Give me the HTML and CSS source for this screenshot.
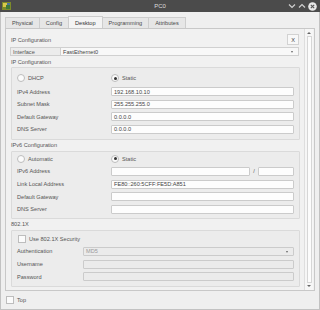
FILE: index.html
```html
<!DOCTYPE html>
<html lang="en">
<head>
  <meta charset="UTF-8">
  <title>PC0</title>
  <link rel="stylesheet" href="styles.css">
</head>
<body>
  <div class="window">
    <div class="titlebar">
      <svg class="app-icon" width="9" height="8" viewBox="0 0 9 8">
        <rect x="0" y="0" width="9" height="8" fill="#7c8a2a"/>
        <rect x="1" y="1" width="4" height="4" fill="#d8c84a"/>
        <rect x="4" y="3" width="4" height="4" fill="#3f7a3a"/>
        <rect x="5" y="1" width="3" height="2" fill="#4a74a0"/>
      </svg>
      <span class="title">PC0</span>
      <div class="controls">
        <svg width="8" height="6" viewBox="0 0 8 6"><path d="M1 1.5 L4 4.5 L7 1.5" fill="none" stroke="#d0d0d0" stroke-width="1.2"/></svg>
        <svg width="8" height="6" viewBox="0 0 8 6"><path d="M1 4.5 L4 1.5 L7 4.5" fill="none" stroke="#d0d0d0" stroke-width="1.2"/></svg>
        <svg width="9" height="9" viewBox="0 0 9 9"><circle cx="4.5" cy="4.5" r="4.3" fill="#e8e8e8"/><path d="M2.8 2.8 L6.2 6.2 M6.2 2.8 L2.8 6.2" stroke="#555" stroke-width="1.1"/></svg>
      </div>
    </div>

    <div class="body">
      <div class="tabs">
        <div class="tab">Physical</div>
        <div class="tab">Config</div>
        <div class="tab active">Desktop</div>
        <div class="tab">Programming</div>
        <div class="tab">Attributes</div>
      </div>

      <div class="panel">
        <div class="content">
          <div class="head">
            <span>IP Configuration</span>
            <div class="close-btn">X</div>
          </div>
          <div class="iface">
            <span class="iface-label">Interface</span>
            <div class="select">FastEthernet0<span class="arrow"></span></div>
          </div>

          <div class="section-title">IP Configuration</div>
          <div class="group">
            <div class="radios">
              <div class="radio"><span class="dot"></span>DHCP</div>
              <div class="radio on"><span class="dot"></span>Static</div>
            </div>
            <div class="field"><span class="lbl">IPv4 Address</span><div class="input">192.168.10.10</div></div>
            <div class="field"><span class="lbl">Subnet Mask</span><div class="input">255.255.255.0</div></div>
            <div class="field"><span class="lbl">Default Gateway</span><div class="input">0.0.0.0</div></div>
            <div class="field"><span class="lbl">DNS Server</span><div class="input">0.0.0.0</div></div>
          </div>

          <div class="section-title">IPv6 Configuration</div>
          <div class="group v6">
            <div class="radios">
              <div class="radio"><span class="dot"></span>Automatic</div>
              <div class="radio on"><span class="dot"></span>Static</div>
            </div>
            <div class="field">
              <span class="lbl">IPv6 Address</span>
              <div class="input"></div>
              <span class="slash">/</span>
              <div class="input prefix"></div>
            </div>
            <div class="field"><span class="lbl">Link Local Address</span><div class="input">FE80::260:5CFF:FE5D:A851</div></div>
            <div class="field"><span class="lbl">Default Gateway</span><div class="input"></div></div>
            <div class="field"><span class="lbl">DNS Server</span><div class="input"></div></div>
          </div>

          <div class="section-title">802.1X</div>
          <div class="group dot1x">
            <div class="checkrow"><span class="check"></span>Use 802.1X Security</div>
            <div class="field"><span class="lbl">Authentication</span><div class="input disabled">MD5<span class="arrow"></span></div></div>
            <div class="field"><span class="lbl">Username</span><div class="input disabled"></div></div>
            <div class="field"><span class="lbl">Password</span><div class="input disabled"></div></div>
          </div>
        </div>

        <div class="scrollbar">
          <span class="sb-arrow up"></span>
          <div class="thumb"></div>
          <span class="sb-arrow down"></span>
        </div>
      </div>

      <div class="bottom"><span class="check"></span>Top</div>
    </div>
  </div>
</body>
</html>
```

FILE: styles.css
```css
body {
  margin: 0;
  font-family: "Liberation Sans", Arial, sans-serif;
  font-size: 5.6px;
  color: #555;
}

.window {
  width: 320px;
  height: 310px;
  box-sizing: border-box;
  background-color: #efefef;
  border: 1px solid #c2c2c2;
  border-top: none;
}

.titlebar {
  height: 12px;
  margin: 0 -1px;
  background-color: #4b4b4b;
  display: flex;
  align-items: center;
  position: relative;
}

.app-icon {
  margin-left: 2px;
}

.title {
  position: absolute;
  left: 0;
  right: 0;
  text-align: center;
  color: #dcdcdc;
  font-size: 6px;
}

.controls {
  margin-left: auto;
  margin-right: 3px;
  display: flex;
  align-items: center;
  gap: 2px;
}

.tabs {
  display: flex;
  align-items: flex-end;
  height: 12px;
  margin-top: 4px;
  padding-left: 4px;
}

.tab {
  height: 11px;
  box-sizing: border-box;
  padding: 0 6px;
  border: 1px solid #cdcdcd;
  border-bottom: none;
  border-right: none;
  background-color: #e6e6e6;
  display: flex;
  align-items: center;
  color: #4a4a4a;
}

.tab:nth-child(5) {
  border-right: 1px solid #cdcdcd;
}

.tab.active {
  height: 12px;
  background-color: #f4f4f4;
  border-right: 1px solid #cdcdcd;
  color: #333;
}

.tab.active + .tab {
  border-left: none;
}

.panel {
  margin: 0 4px 0 4px;
  height: 263px;
  box-sizing: border-box;
  border: 1px solid #c8c8c8;
  background-color: #f1f1f1;
  display: flex;
}

.content {
  flex: 1;
  padding: 5px 4px 0 4px;
}

.head {
  height: 11px;
  display: flex;
  align-items: center;
  justify-content: space-between;
  padding-left: 1px;
  padding-right: 1px;
}

.close-btn {
  width: 12px;
  height: 11px;
  box-sizing: border-box;
  border: 1px solid #d2d2d2;
  background-color: #f8f8f8;
  display: flex;
  align-items: center;
  justify-content: center;
  color: #444;
}

.iface {
  margin-top: 2px;
  margin-right: 1px;
  height: 9px;
  box-sizing: border-box;
  display: flex;
  border: 1px solid #d0d0d0;
}

.iface-label {
  width: 50px;
  display: flex;
  align-items: center;
  padding-left: 2px;
  box-sizing: border-box;
  border-right: 1px solid #d0d0d0;
  background-color: #ececec;
}

.select {
  flex: 1;
  background-color: #f8f8f8;
  display: flex;
  align-items: center;
  padding-left: 2px;
  color: #444;
  position: relative;
}

.arrow {
  position: absolute;
  right: 5px;
  top: 3px;
  border-left: 1.5px solid transparent;
  border-right: 1.5px solid transparent;
  border-top: 2px solid #666;
}

.section-title {
  height: 11px;
  display: flex;
  align-items: center;
  padding-left: 1px;
}

.group {
  margin: 0 0 0 1px;
  border: 1px solid #dadada;
  border-radius: 1px;
  padding: 4px 5px 5px 5px;
  background-color: #ececec;
}

.radios {
  height: 12px;
  display: flex;
  align-items: center;
}

.radio {
  display: flex;
  align-items: center;
  gap: 3px;
}

.radio:first-child {
  width: 94px;
}

.dot {
  width: 6px;
  height: 6px;
  border-radius: 50%;
  border: 1px solid #bdbdbd;
  background-color: #fbfbfb;
  display: flex;
  align-items: center;
  justify-content: center;
}

.radio.on .dot::after {
  content: "";
  width: 3px;
  height: 3px;
  border-radius: 50%;
  background-color: #333;
}

.field {
  display: flex;
  align-items: center;
  height: 9px;
  margin-top: 3.67px;
}

.radios + .field {
  margin-top: 3px;
}

.lbl {
  width: 94px;
  flex-shrink: 0;
}

.input {
  flex: 1;
  height: 9px;
  box-sizing: border-box;
  border: 1px solid #cbcbcb;
  border-radius: 1px;
  background-color: #fdfdfd;
  display: flex;
  align-items: center;
  padding-left: 2px;
  color: #444;
  position: relative;
}

.slash {
  width: 8px;
  text-align: center;
}

.input.prefix {
  flex: 0 0 36px;
}

.group.v6 {
  padding-top: 2px;
  padding-bottom: 4px;
}

.group.v6 .radios {
  height: 10px;
}

.group.dot1x {
  padding-top: 2px;
}

.dot1x .lbl {
  width: 66px;
}

.checkrow + .field {
  margin-top: 2px;
}

.input.disabled {
  background-color: #ebebeb;
  color: #9a9a9a;
}

.checkrow {
  height: 12px;
  display: flex;
  align-items: center;
  gap: 3px;
  padding-left: 1px;
}

.check {
  width: 6px;
  height: 6px;
  border: 1px solid #bdbdbd;
  background-color: #fbfbfb;
  display: inline-block;
}

.scrollbar {
  width: 8px;
  margin-right: 1px;
  display: flex;
  flex-direction: column;
  align-items: center;
  background-color: #f6f6f6;
  border-left: 1px solid #dedede;
}

.thumb {
  flex: 1;
  width: 5px;
  box-sizing: border-box;
  border: 1px solid #d6d6d6;
  background-color: #fcfcfc;
  margin: 1px 0;
}

.sb-arrow {
  width: 0;
  height: 0;
  border-left: 2px solid transparent;
  border-right: 2px solid transparent;
  margin: 3px 0 1px 0;
}

.sb-arrow.up {
  border-bottom: 2px solid #666;
}

.sb-arrow.down {
  border-top: 2px solid #666;
  margin: 1px 0 3px 0;
}

.bottom {
  display: flex;
  align-items: center;
  gap: 3px;
  height: 12px;
  padding-left: 5px;
  margin-top: 3px;
}
```
